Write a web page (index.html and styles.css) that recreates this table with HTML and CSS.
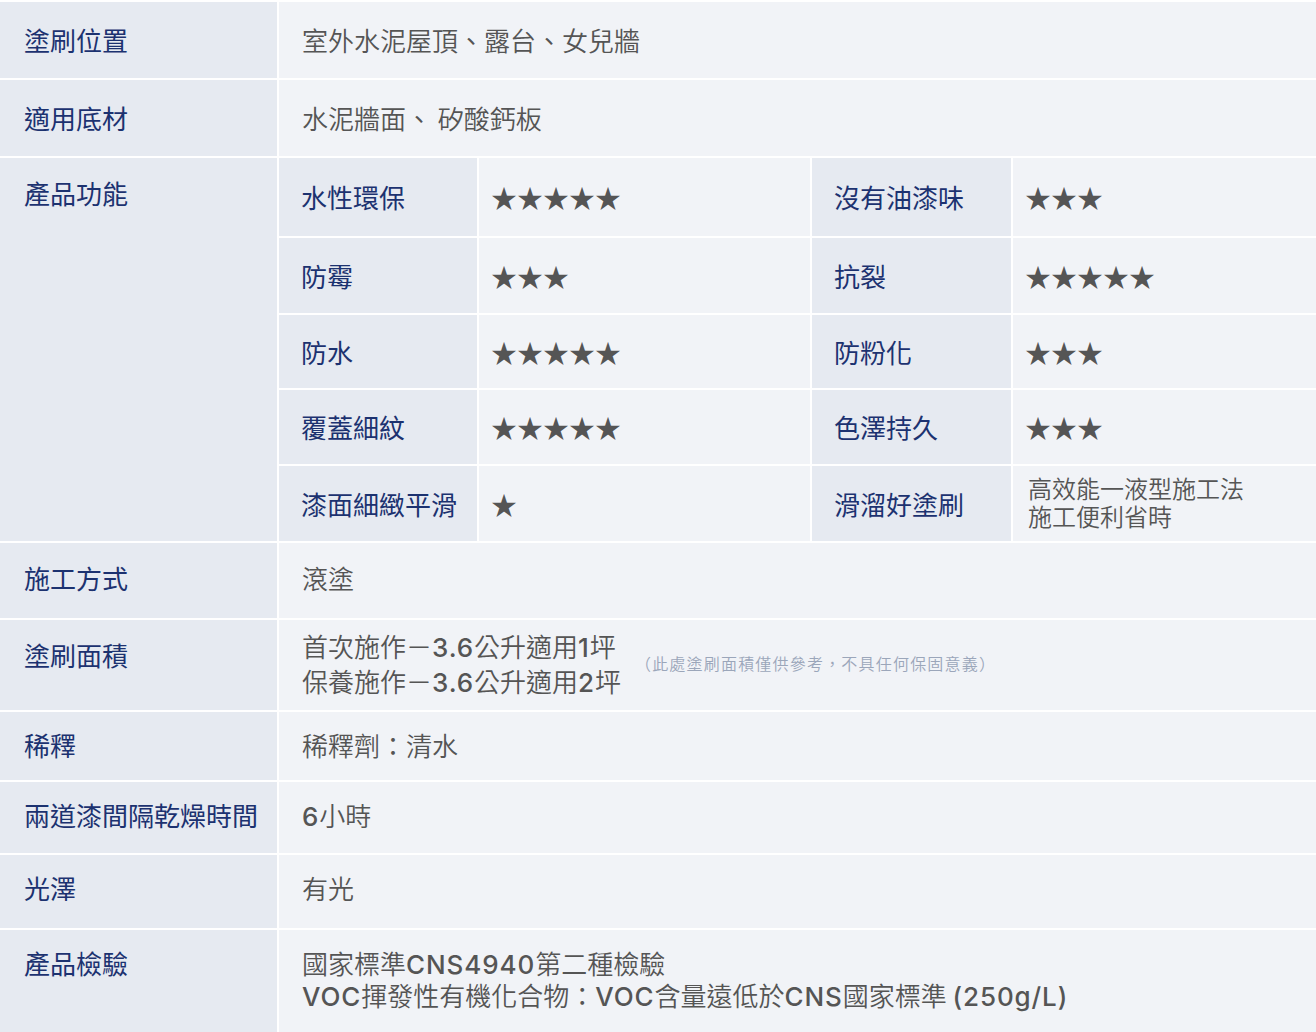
FILE: index.html
```html
<!DOCTYPE html>
<html lang="zh-Hant">
<head>
<meta charset="utf-8">
<title>產品規格</title>
<link rel="stylesheet" href="styles.css">
</head>
<body>
<div class="spec">
  <div class="lab lab-hi">塗刷位置</div>
  <div class="val val-hi">室外水泥屋頂、露台、女兒牆</div>

  <div class="lab lab-hi">適用底材</div>
  <div class="val val-hi">水泥牆面、 矽酸鈣板</div>

  <div class="lab lab-mid">產品功能</div>
  <div class="feat">
    <div class="flab">水性環保</div><div class="fval">★★★★★</div>
    <div class="flab">沒有油漆味</div><div class="fval">★★★</div>

    <div class="flab">防霉</div><div class="fval">★★★</div>
    <div class="flab">抗裂</div><div class="fval">★★★★★</div>

    <div class="flab">防水</div><div class="fval">★★★★★</div>
    <div class="flab">防粉化</div><div class="fval">★★★</div>

    <div class="flab">覆蓋細紋</div><div class="fval">★★★★★</div>
    <div class="flab">色澤持久</div><div class="fval">★★★</div>

    <div class="flab">漆面細緻平滑</div><div class="fval">★</div>
    <div class="flab">滑溜好塗刷</div><div class="fval fval-text">高效能一液型施工法<br>施工便利省時</div>
  </div>

  <div class="lab lab-mid">施工方式</div>
  <div class="val val-mid">滾塗</div>

  <div class="lab lab-mid">塗刷面積</div>
  <div class="val val-area">
    <div class="area-lines">
      <div>首次施作－<span class="num">3.6</span>公升適用<span class="num">1</span>坪</div>
      <div>保養施作－<span class="num">3.6</span>公升適用<span class="num">2</span>坪</div>
    </div>
    <div class="note">（此處塗刷面積僅供參考，不具任何保固意義）</div>
  </div>

  <div class="lab">稀釋</div>
  <div class="val">稀釋劑：清水</div>

  <div class="lab">兩道漆間隔乾燥時間</div>
  <div class="val"><span class="num">6</span>小時</div>

  <div class="lab">光澤</div>
  <div class="val">有光</div>

  <div class="lab">產品檢驗</div>
  <div class="val">國家標準<span class="num">CNS4940</span>第二種檢驗<br><span class="num">VOC</span>揮發性有機化合物：<span class="num">VOC</span>含量遠低於<span class="num">CNS</span>國家標準 <span class="num">(250g/L)</span></div>
</div>
</body>
</html>
```

FILE: styles.css
```css
html, body {
  margin: 0;
  padding: 0;
  background: #ffffff;
}

body {
  font-family: "Noto Sans CJK TC", "Noto Sans CJK SC", sans-serif;
  font-size: 26px;
  color: #555555;
}

.spec {
  display: grid;
  grid-template-columns: 277px 1fr;
  grid-template-rows: 76px 76px 383px 75px 90px 68px 71px 73px 102px;
  gap: 2px;
  padding-top: 2px;
  background: #ffffff;
}

.lab {
  background: #e6eaf1;
  color: #1c3270;
  padding: 17px 0 0 24px;
  line-height: 32px;
  white-space: nowrap;
}

.val {
  background: #f1f3f7;
  color: #555555;
  font-weight: 350;
  padding: 17px 0 0 23px;
  line-height: 32px;
}

.lab-hi,
.val-hi {
  padding-top: 22px;
}

.lab-mid,
.val-mid {
  padding-top: 19px;
}

.val-area {
  display: flex;
  align-items: flex-start;
  padding-top: 8px;
  gap: 14px;
}

.area-lines {
  line-height: 35px;
}

.area-lines > div {
  height: 35px;
}

.note {
  font-size: 16px;
  letter-spacing: 1.2px;
  color: #9ba6ba;
  line-height: 20px;
  margin-top: 25px;
}

.num {
  font-family: "Inter", "Noto Sans CJK TC", sans-serif;
  font-weight: 500;
  line-height: 1;
  letter-spacing: 0.9px;
}

.feat {
  display: grid;
  grid-template-columns: 198px 331px 199px 1fr;
  grid-template-rows: 78px 75px 73px 74px 1fr;
  gap: 2px;
  background: #ffffff;
}

.flab {
  background: #e6eaf1;
  color: #1c3270;
  display: flex;
  align-items: center;
  padding-left: 22px;
  line-height: 32px;
  white-space: nowrap;
}

.fval {
  background: #f1f3f7;
  color: #555555;
  display: flex;
  align-items: center;
  padding-left: 12px;
  line-height: 32px;
}

.fval-text {
  font-size: 24px;
  font-weight: 350;
  color: #555555;
  line-height: 28px;
  padding-left: 15px;
  padding-bottom: 4px;
}
```
